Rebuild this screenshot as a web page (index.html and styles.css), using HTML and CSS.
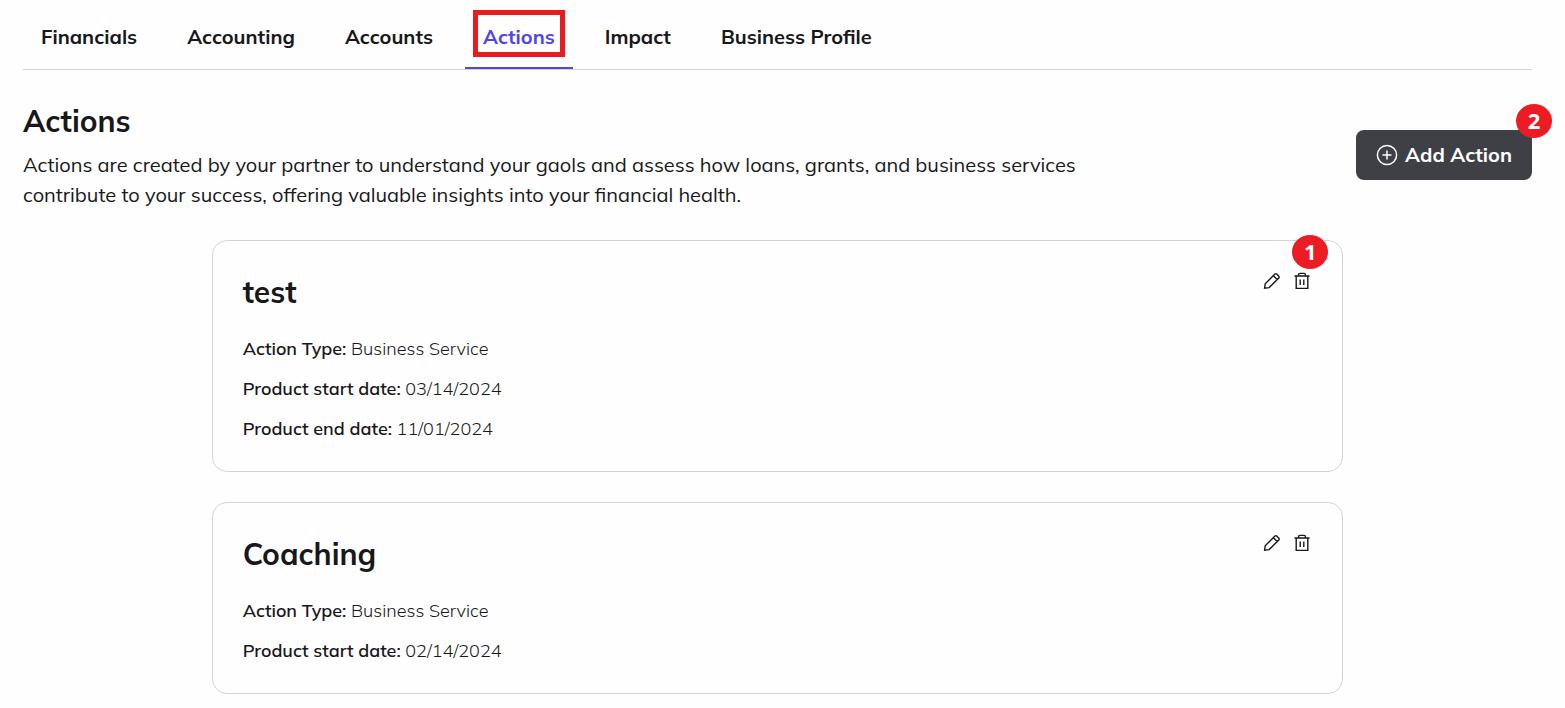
FILE: index.html
```html
<!DOCTYPE html>
<html lang="en">
<head>
  <meta charset="UTF-8" />
  <meta name="viewport" content="width=device-width, initial-scale=1" />
  <title>Actions</title>
  <link rel="stylesheet" href="styles.css">
</head>
<body>

  <svg class="sprite" aria-hidden="true">
    <symbol id="icon-edit" viewBox="0 0 18 18">
      <path d="M1.6 16.2 L2.2 11.8 L11.9 2.1 Q12.8 1.3 13.7 2.1 L15.8 4.2 Q16.6 5.1 15.8 6 L6.1 15.6 Z M10.3 3.7 L14.2 7.6" />
    </symbol>
    <symbol id="icon-trash" viewBox="0 0 18 18">
      <path d="M1.5 4 H16.5 M3.2 4 V16.4 H14.8 V4 M5.6 4 V2.6 Q5.6 1.4 6.8 1.4 H11.2 Q12.4 1.4 12.4 2.6 V4 M7.2 7.5 V13 M10.8 7.5 V13" />
    </symbol>
  </svg>

  <nav class="tabs">
    <a href="#financials">Financials</a>
    <a href="#accounting">Accounting</a>
    <a href="#accounts">Accounts</a>
    <a href="#actions" class="active">Actions</a>
    <a href="#impact">Impact</a>
    <a href="#profile">Business Profile</a>
  </nav>

  <main>
    <header class="page-header">
      <div class="intro">
        <h1>Actions</h1>
        <p>Actions are created by your partner to understand your gaols and assess how loans, grants, and business services contribute to your success, offering valuable insights into your financial health.</p>
      </div>
      <div class="add-wrap">
        <button type="button" class="add-btn">
          <svg viewBox="0 0 22 22" aria-hidden="true">
            <circle cx="11" cy="11" r="9.6" />
            <path d="M11 6.5 V15.5 M6.5 11 H15.5" />
          </svg>
          Add Action
        </button>
        <span class="marker marker-add">2</span>
      </div>
    </header>

    <section class="cards">
      <article class="card">
        <h2>test</h2>
        <p><strong>Action Type:</strong> Business Service</p>
        <p><strong>Product start date:</strong> 03/14/2024</p>
        <p><strong>Product end date:</strong> 11/01/2024</p>
        <div class="card-tools">
          <button type="button" aria-label="Edit test"><svg><use href="#icon-edit" /></svg></button>
          <button type="button" aria-label="Delete test"><svg><use href="#icon-trash" /></svg></button>
        </div>
        <span class="marker marker-card">1</span>
      </article>

      <article class="card">
        <h2>Coaching</h2>
        <p><strong>Action Type:</strong> Business Service</p>
        <p><strong>Product start date:</strong> 02/14/2024</p>
        <div class="card-tools">
          <button type="button" aria-label="Edit Coaching"><svg><use href="#icon-edit" /></svg></button>
          <button type="button" aria-label="Delete Coaching"><svg><use href="#icon-trash" /></svg></button>
        </div>
      </article>
    </section>
  </main>

</body>
</html>
```
FILE: styles.css
```css
:root {
  --text: #18181b;
  --accent: #4f46e5;
  --border: #d4d4d4;
  --dark: #3f3f46;
  --marker: #ed1c24;
}

* {
  box-sizing: border-box;
}

body {
  margin: 0;
  padding: 0 33px 14px 23px;
  font-family: Mulish, "Open Sans", "Noto Sans", sans-serif;
  background: #fefefe;
  color: var(--text);
}

.sprite {
  display: none;
}

button {
  font-family: inherit;
  border: none;
  cursor: pointer;
}

svg {
  fill: none;
  stroke: currentColor;
}

.tabs {
  display: flex;
  gap: 14px;
  height: 70px;
  border-bottom: 1px solid var(--border);
}

.tabs a {
  position: relative;
  padding: 22px 18px 15px;
  font-size: 20px;
  line-height: 30px;
  font-weight: 700;
  color: inherit;
  text-decoration: none;
  white-space: nowrap;
}

.tabs .active {
  color: var(--accent);
  border-bottom: 2px solid var(--accent);
}

.tabs .active::after {
  content: "";
  position: absolute;
  inset: 10px 8px;
  border: 5px solid #e81c1c;
}

.page-header {
  display: flex;
  justify-content: space-between;
  align-items: center;
  padding: 30px 0;
}

.intro {
  max-width: 1080px;
}

h1,
h2 {
  margin: 0;
  font-size: 30px;
  line-height: 42px;
  font-weight: 700;
}

h1 {
  margin-bottom: 8px;
}

.intro p {
  margin: 0;
  font-size: 20px;
  line-height: 30px;
}

.add-wrap {
  position: relative;
}

.add-btn {
  display: flex;
  align-items: center;
  gap: 7px;
  padding: 10px 20px;
  border-radius: 8px;
  background: var(--dark);
  color: white;
  font-size: 20px;
  line-height: 30px;
  font-weight: 700;
  white-space: nowrap;
}

.add-btn svg {
  width: 22px;
  height: 22px;
  stroke-width: 1.5;
}

.marker {
  position: absolute;
  width: 36px;
  height: 34px;
  border-radius: 50%;
  background: var(--marker);
  color: white;
  font-family: "Noto Sans", sans-serif;
  font-size: 22px;
  line-height: 32px;
  font-weight: 700;
  text-align: center;
}

.marker-add {
  top: -26px;
  right: -20px;
}

.marker-card {
  top: -6px;
  right: 14px;
}

.cards {
  display: flex;
  flex-direction: column;
  gap: 30px;
  width: 75%;
  margin: 0 auto;
}

.card {
  position: relative;
  padding: 30px 30px 27px;
  border: 1px solid var(--border);
  border-radius: 15px;
}

.card h2 {
  margin-bottom: 21px;
}

.card p {
  margin: 0 0 10px;
  font-size: 18px;
  line-height: 30px;
  font-weight: 300;
}

.card strong {
  font-weight: 600;
}

.card p:last-of-type {
  margin-bottom: 0;
}

.card-tools {
  position: absolute;
  top: 31px;
  right: 31px;
  display: flex;
  gap: 12px;
}

.card-tools button {
  display: flex;
  padding: 0;
  background: none;
  color: var(--text);
}

.card-tools svg {
  width: 18px;
  height: 18px;
  stroke-width: 1.4;
}
```
